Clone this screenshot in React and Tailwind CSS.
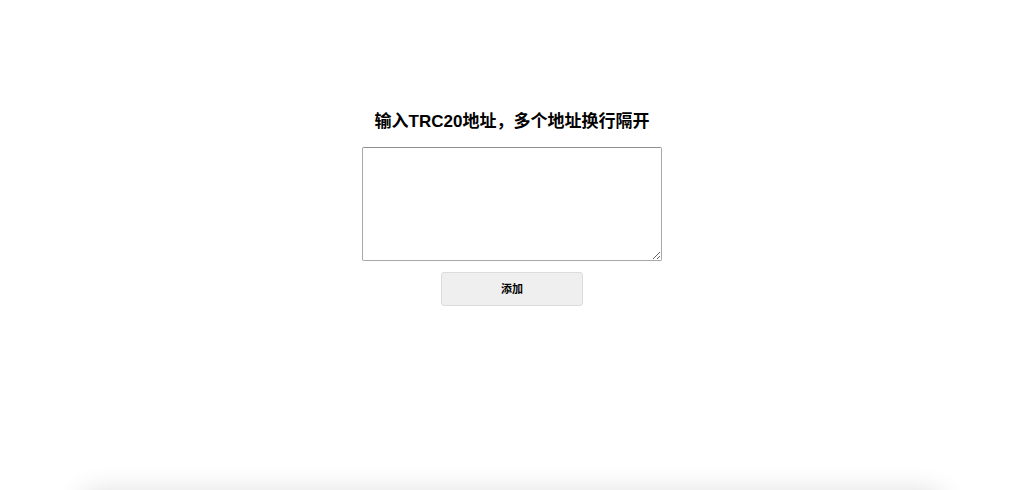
import { useState } from "react";

export default function App() {
  const [addrs, setAddrs] = useState("");

  return (
    <div className="h-[490px] bg-white overflow-hidden" style={{ fontFamily: '"Liberation Sans", "Noto Sans CJK SC", sans-serif' }}>
      <div className="flex flex-col items-center pt-[108px]">
        <h2 className="text-[17px] leading-7 font-bold text-black">输入TRC20地址，多个地址换行隔开</h2>
        <textarea
          value={addrs}
          onChange={(e) => setAddrs(e.target.value)}
          className="mt-[11px] w-[300px] h-[114px] border border-[#a8a8a8] border-t-[#8f8f8f] rounded-[2px] bg-white p-1 text-sm outline-none"
        />
        <button className="mt-[11px] w-[142px] h-[34px] bg-[#efefef] border border-[#dcdcdc] rounded-[3px] text-[11px] font-semibold text-black">
          添加
        </button>
      </div>
      <div className="mx-auto mt-[186px] w-[860px] h-10 rounded-xl bg-white shadow-[0_0_28px_rgba(0,0,0,0.14)]" />
    </div>
  );
}
